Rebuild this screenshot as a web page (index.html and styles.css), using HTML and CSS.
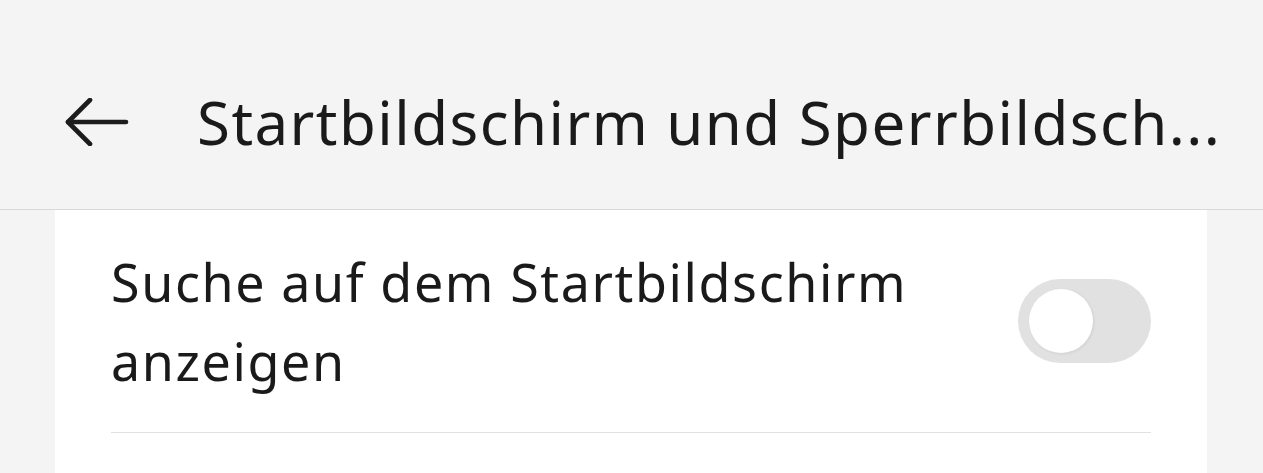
FILE: index.html
```html
<!DOCTYPE html>
<html lang="de">
<head>
<meta charset="utf-8">
<title>Startbildschirm und Sperrbildschirm</title>
<link rel="stylesheet" href="styles.css">
</head>
<body>
<header class="appbar">
  <div class="appbar-row">
    <button class="back" aria-label="Zurück">
      <svg width="64" height="48" viewBox="0 0 64 48" fill="none" stroke="#1c1c1c" stroke-width="4.6" stroke-linecap="round" stroke-linejoin="round">
        <path d="M3 24 H61"/>
        <path d="M25 2 L3 24 L25 46"/>
      </svg>
    </button>
    <h1 class="title">Startbildschirm und Sperrbildsch...</h1>
  </div>
</header>
<main class="card">
  <div class="row">
    <div class="row-inner">
      <p class="label">Suche auf dem Startbildschirm anzeigen</p>
      <div class="switch" role="switch" aria-checked="false"><span class="knob"></span></div>
    </div>
  </div>
</main>
</body>
</html>
```
FILE: styles.css
```css
html, body {
  margin: 0;
  padding: 0;
  background: #f4f4f4;
  font-family: "Noto Sans", "Open Sans", sans-serif;
  color: #1a1a1a;
  height: 473px;
  overflow: hidden;
}
.appbar {
  height: 210px;
  box-sizing: border-box;
  padding: 76px 20px 0 65px;
  border-bottom: 1px solid #d9d9d9;
}
.appbar-row {
  display: flex;
  align-items: center;
  height: 92px;
}
.back {
  flex: none;
  padding: 0;
  margin: 0;
  border: 0;
  background: none;
  display: flex;
  width: 64px;
  height: 48px;
}
.title {
  margin: 0 0 0 68px;
  font-size: 60px;
  font-weight: 400;
  line-height: 1;
  letter-spacing: 1.45px;
  white-space: nowrap;
  min-width: 0;
}
.card {
  margin: 0 56px 0 55px;
  background: #fff;
  height: 263px;
}
.row {
  padding: 0 56px 0 56px;
}
.row-inner {
  display: flex;
  align-items: center;
  justify-content: space-between;
  border-bottom: 1px solid #e2e2e2;
  height: 223px;
  box-sizing: border-box;
}
.label {
  margin: 0;
  font-size: 52px;
  line-height: 79px;
  letter-spacing: 1.6px;
  max-width: 840px;
}
.switch {
  flex: none;
  width: 133px;
  height: 84px;
  border-radius: 42px;
  background: #e1e1e1;
  position: relative;
}
.knob {
  position: absolute;
  left: 11px;
  top: 10px;
  width: 64px;
  height: 64px;
  border-radius: 50%;
  background: #fff;
  box-shadow: 1px 1px 3px rgba(0,0,0,0.08);
}
```
